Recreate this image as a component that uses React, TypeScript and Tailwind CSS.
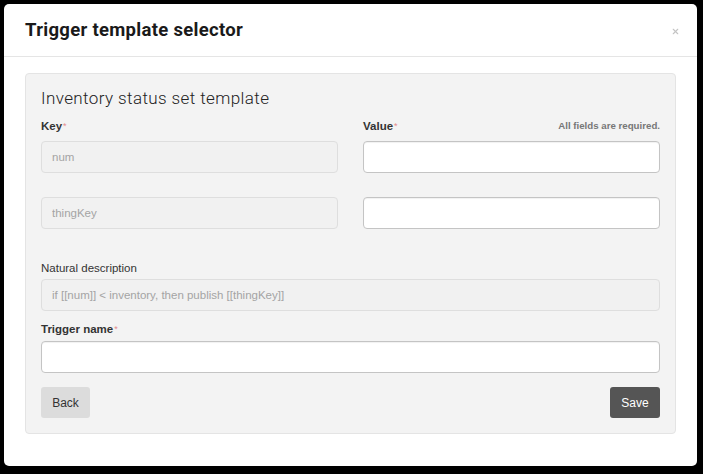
import { X } from "lucide-react";

const label = "block text-[11.5px] font-bold leading-[16px] text-[#333]";
const disabledInput =
  "h-[32px] w-full rounded-[4px] border border-[#dedede] bg-[#f1f1f1] px-[10px] text-[11.5px] text-[#a4a4a4] outline-none";
const input =
  "h-[32px] w-full rounded-[4px] border border-[#c4c4c4] bg-white px-[10px] text-[12px] text-[#333] outline-none shadow-[inset_0_1px_1px_rgba(0,0,0,0.06)]";

function Req() {
  return <span className="ml-[1px] align-top text-[9px] font-normal text-[#e58b8b]">*</span>;
}

export default function App() {
  return (
    <div className="h-[474px] w-[703px] bg-black pl-[4px] pt-[4px] font-['Liberation_Sans',Arial,sans-serif]">
      <div className="h-[462px] w-[693px] rounded-[5px] bg-white">
        {/* Header */}
        <div className="flex h-[53px] items-center justify-between border-b border-[#e5e5e5] pl-[21px] pr-[17px] pt-[2px]">
          <h1 className="font-['Roboto',sans-serif] text-[18.5px] font-bold tracking-[0.3px] text-[#1a1a1a]">
            Trigger template selector
          </h1>
          <button type="button" className="text-[#c4c4c4]" aria-label="Close">
            <X className="h-[9px] w-[9px]" strokeWidth={3} />
          </button>
        </div>

        {/* Body */}
        <div className="px-[21px] pt-[16px]">
          <div className="rounded-[4px] border border-[#e4e4e4] bg-[#f3f3f3] px-[15px] pb-[15px] pt-[12px]">
            <h2 className="font-['Roboto',sans-serif] text-[17px] font-light leading-[24px] tracking-[0.4px] text-[#222]">
              Inventory status set template
            </h2>

            <div className="mt-[8px] grid grid-cols-2 gap-x-[25px]">
              <div>
                <label className={label}>
                  Key
                  <Req />
                </label>
                <input disabled value="num" readOnly className={`mt-[7px] ${disabledInput}`} />
                <input disabled value="thingKey" readOnly className={`mt-[24px] ${disabledInput}`} />
              </div>
              <div>
                <div className="flex items-center justify-between">
                  <label className={label}>
                    Value
                    <Req />
                  </label>
                  <span className="text-[9.7px] font-bold text-[#777]">All fields are required.</span>
                </div>
                <input className={`mt-[7px] ${input}`} />
                <input className={`mt-[24px] ${input}`} />
              </div>
            </div>

            <label className="mt-[31px] block text-[11.5px] leading-[16px] text-[#333]">
              Natural description
            </label>
            <input
              disabled
              readOnly
              value="if [[num]] < inventory, then publish [[thingKey]]"
              className={`mt-[3px] ${disabledInput}`}
            />

            <label className={`mt-[10px] ${label}`}>
              Trigger name
              <Req />
            </label>
            <input className={`mt-[4px] ${input}`} />

            <div className="mt-[14px] flex justify-between">
              <button
                type="button"
                className="h-[31px] w-[49px] rounded-[3px] bg-[#dcdcdc] text-[12px] text-[#333]"
              >
                Back
              </button>
              <button
                type="button"
                className="h-[31px] w-[50px] rounded-[3px] bg-[#555] text-[12px] text-white"
              >
                Save
              </button>
            </div>
          </div>
        </div>
      </div>
    </div>
  );
}
